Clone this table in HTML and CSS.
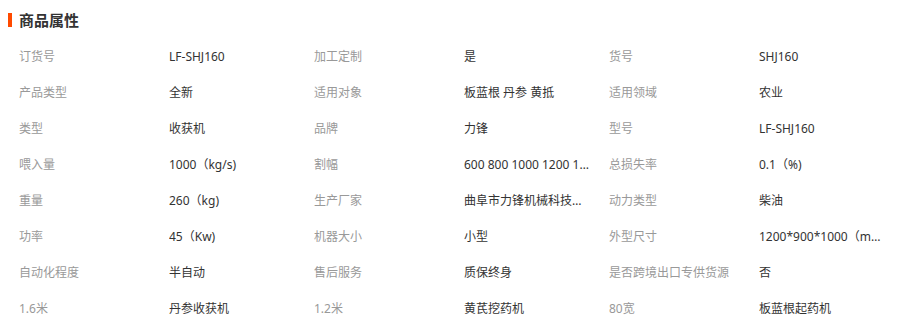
FILE: index.html
```html
<!DOCTYPE html>
<html lang="zh-CN">
<head>
<meta charset="utf-8">
<link rel="stylesheet" href="styles.css">
</head>
<body>
<div class="attrs">
  <h3 class="title">商品属性</h3>
  <div class="grid">
    <div class="k">订货号</div><div class="v">LF-SHJ160</div>
    <div class="k">加工定制</div><div class="v">是</div>
    <div class="k">货号</div><div class="v">SHJ160</div>

    <div class="k">产品类型</div><div class="v">全新</div>
    <div class="k">适用对象</div><div class="v">板蓝根 丹参 黄抵</div>
    <div class="k">适用领域</div><div class="v">农业</div>

    <div class="k">类型</div><div class="v">收获机</div>
    <div class="k">品牌</div><div class="v">力锋</div>
    <div class="k">型号</div><div class="v">LF-SHJ160</div>

    <div class="k">喂入量</div><div class="v">1000（kg/s)</div>
    <div class="k">割幅</div><div class="v"><span class="clip">600 800 1000 1200 1400 1600</span></div>
    <div class="k">总损失率</div><div class="v">0.1（%)</div>

    <div class="k">重量</div><div class="v">260（kg)</div>
    <div class="k">生产厂家</div><div class="v"><span class="clip">曲阜市力锋机械科技有限公司</span></div>
    <div class="k">动力类型</div><div class="v">柴油</div>

    <div class="k">功率</div><div class="v">45（Kw)</div>
    <div class="k">机器大小</div><div class="v">小型</div>
    <div class="k">外型尺寸</div><div class="v"><span class="clip">1200*900*1000（mm)</span></div>

    <div class="k">自动化程度</div><div class="v">半自动</div>
    <div class="k">售后服务</div><div class="v">质保终身</div>
    <div class="k">是否跨境出口专供货源</div><div class="v">否</div>

    <div class="k">1.6米</div><div class="v">丹参收获机</div>
    <div class="k">1.2米</div><div class="v">黄芪挖药机</div>
    <div class="k">80宽</div><div class="v">板蓝根起药机</div>
  </div>
</div>
</body>
</html>
```

FILE: styles.css
```css
html, body {
  margin: 0;
  padding: 0;
  background: #fff;
}
body {
  font-family: "Noto Sans", "Noto Sans CJK SC", sans-serif;
  font-size: 12px;
  color: #333;
}
.attrs {
  padding: 0 0 0 8px;
}
.title {
  margin: 0;
  height: 39px;
  display: flex;
  align-items: center;
  padding-bottom: 0;
  box-sizing: border-box;
  font-size: 15px;
  font-weight: bold;
  color: #333;
  font-family: "Noto Sans CJK SC", sans-serif;
}
.title::before {
  content: "";
  display: block;
  width: 4px;
  height: 14px;
  background: #ff4a00;
  margin-right: 7px;
}
.grid {
  display: grid;
  grid-template-columns: 150px 145px 150px 145px 150px 145px;
  grid-auto-rows: 36px;
  padding-left: 11px;
}
.k, .v {
  white-space: nowrap;
  overflow: hidden;
  line-height: 36px;
}
.k {
  color: #999;
}
.v {
  color: #333;
  padding-right: 20px;
}
.clip {
  display: block;
  width: 125px;
  overflow: hidden;
  text-overflow: ellipsis;
  white-space: nowrap;
}
```
